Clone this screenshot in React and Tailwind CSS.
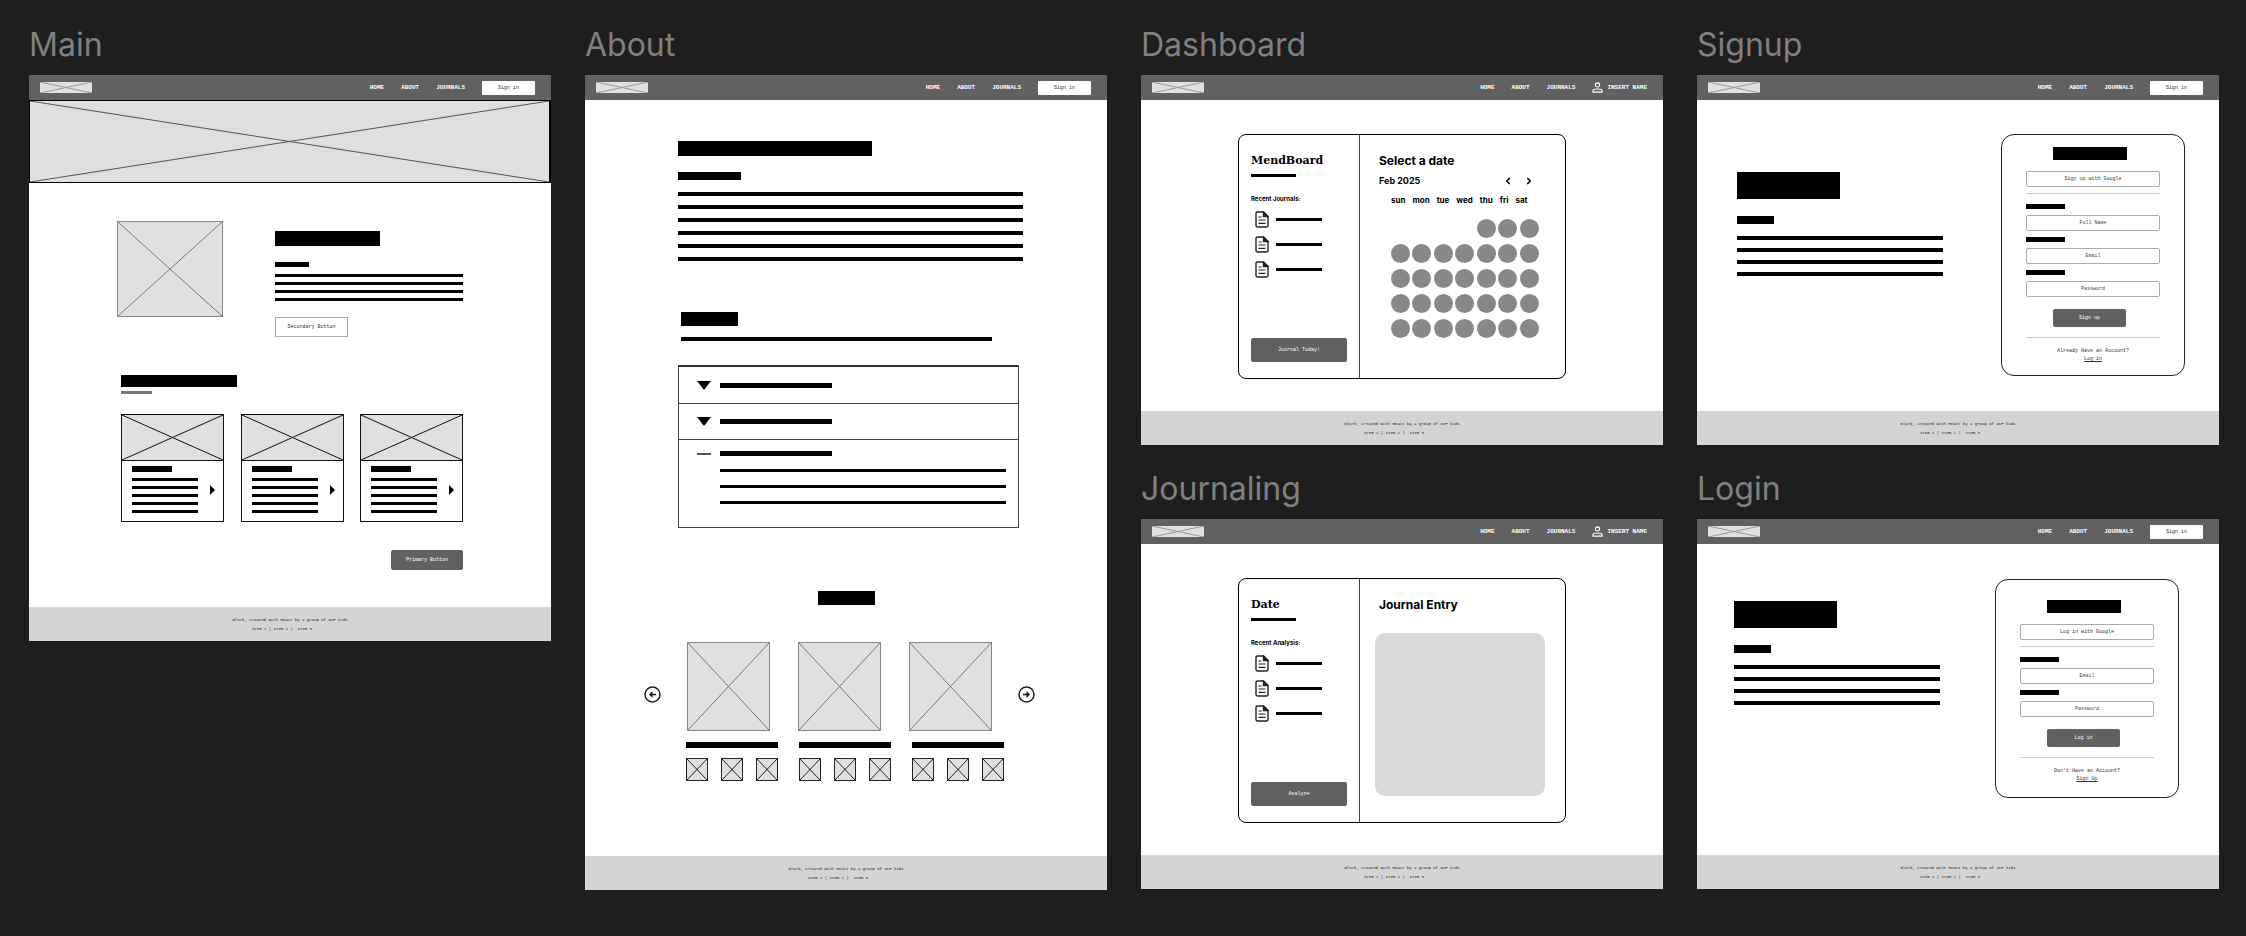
import clsx from "clsx";
import { ChevronLeft, ChevronRight } from "lucide-react";

const inter = "font-['Inter',sans-serif]";
const mono = "font-['Liberation_Mono',monospace]";
const slab = "font-['DejaVu_Serif',serif]";

// Solid block that stands in for copy
const Bar = ({ className }) => <div className={clsx("bg-black", className)} />;

const Lines = ({ count, className, line }) => (
    <div className={clsx("flex flex-col", className)}>
        {Array.from({ length: count }, (_, i) => <Bar key={i} className={line} />)}
    </div>
);

// Crossed box that stands in for an image
const Placeholder = ({ className, stroke = "#777777" }) => (
    <div className={clsx("bg-[#e0e0e0]", className)}>
        <svg className="block size-full" viewBox="0 0 100 100" preserveAspectRatio="none" stroke={stroke}>
            <path d="M0 0L100 100M100 0L0 100" vectorEffect="non-scaling-stroke" />
        </svg>
    </div>
);

const UserIcon = () => (
    <svg className="h-[11px] w-[11px]" viewBox="0 0 11 11" fill="none" stroke="white" strokeWidth="1.2">
        <circle cx="5.5" cy="2.9" r="2.1" />
        <path d="M1 10.2V8.6C1 7.6 2.2 7 5.5 7S10 7.6 10 8.6v1.6z" />
    </svg>
);

const FileIcon = () => (
    <svg className="h-[17px] w-[14px]" viewBox="0 0 14 17" fill="none" stroke="#222222" strokeWidth="1.4">
        <path d="M8.5 1H2.4Q1 1 1 2.4v12.2Q1 16 2.4 16h9.2q1.4 0 1.4-1.4V5.5z" strokeLinejoin="round" />
        <path d="M8.5 1v4.5H13z" fill="#222222" />
        <path d="M3.5 6h3M3.5 9h7M3.5 12.4h7" strokeWidth="1.1" />
    </svg>
);

const CircleArrow = ({ flip }) => (
    <svg className={clsx("size-[17px]", flip && "rotate-180")} viewBox="0 0 17 17" fill="none" stroke="#222222">
        <circle cx="8.5" cy="8.5" r="7.5" strokeWidth="1.5" />
        <path d="M12 8.5H6" strokeWidth="1.6" />
        <path d="M8.5 5L5 8.5 8.5 12z" fill="#222222" stroke="none" />
    </svg>
);

const NavBar = ({ account }) => (
    <header className={clsx("flex h-[25px] items-center bg-[#616161] pl-[11px] pr-4", mono)}>
        <Placeholder className="h-[11px] w-[52px]" stroke="#999999" />
        <nav className="ml-auto flex items-center gap-[17px] text-[6px] font-bold leading-[8px] text-white">
            <a href="#home">HOME</a>
            <a href="#about">ABOUT</a>
            <a href="#journals">JOURNALS</a>
            {account
                ? <a href="#account" className="flex items-center gap-1"><UserIcon />INSERT NAME</a>
                : <button className="h-[14px] w-[53px] rounded-[1px] bg-white text-[5px] font-normal text-[#333333]">Sign in</button>}
        </nav>
    </header>
);

const Footer = () => (
    <footer className={clsx("h-[34px] bg-[#d4d4d4] pt-[9px] text-center text-[4px] leading-[9px] text-[#222222]", mono)}>
        <p>Blurb, created with React by a group of UCF kids</p>
        <p className="whitespace-pre pr-4">
            <a href="#item1">Item 1</a> | <a href="#item2">Item 2</a> |{"  "}<a href="#item3">Item 3</a>
        </p>
    </footer>
);

const Frame = ({ title, account, children }) => (
    <article>
        <h2 className={clsx("mb-[10px] text-[32px] leading-10 text-[#808080]", inter)}>{title}</h2>
        <div className="bg-white">
            <NavBar account={account} />
            {children}
            <Footer />
        </div>
    </article>
);

const PrimaryButton = ({ className, children }) => (
    <button className={clsx("rounded-[2px] bg-[#616161] text-[5px] leading-[8px] text-white", mono, className)}>
        {children}
    </button>
);

const PostCard = () => (
    <div className="w-[103px] border border-[#111111]">
        <Placeholder className="h-[46px] border-b border-[#111111]" stroke="#111111" />
        <div className="flex items-center justify-between pb-2 pl-[10px] pr-2 pt-[5px]">
            <div className="w-[66px]">
                <Bar className="h-[6px] w-[40px]" />
                <Lines count={5} className="mt-[6px] gap-[5px]" line="h-[3px]" />
            </div>
            <svg className="h-[10px] w-[5px]" viewBox="0 0 5 10"><path d="M0 0L5 5 0 10z" /></svg>
        </div>
    </div>
);

const Main = () => (
    <Frame title="Main">
        <Placeholder className="h-[83px] border border-r-2 border-black" stroke="#555555" />
        <div className="px-[88px] pb-[37px] pt-[38px]">
            <div className="flex items-start justify-between">
                <Placeholder className="h-[96px] w-[106px] border border-[#888888]" />
                <div className="w-[188px] pt-[10px]">
                    <Bar className="h-[15px] w-[105px]" />
                    <Bar className="mt-4 h-[5px] w-[34px]" />
                    <Lines count={4} className="mt-[7px] gap-[5px]" line="h-[3px]" />
                    <button className={clsx("mt-4 block h-5 w-[73px] border border-[#aaaaaa] text-[5px] leading-[8px] text-[#333333]", mono)}>
                        Secondary Button
                    </button>
                </div>
            </div>
            <div className="ml-1 mt-[38px]">
                <Bar className="h-[12px] w-[116px]" />
                <div className="mt-1 h-[3px] w-[31px] bg-[#777777]" />
                <div className="mt-5 flex justify-between">
                    <PostCard />
                    <PostCard />
                    <PostCard />
                </div>
            </div>
            <PrimaryButton className="ml-auto mt-7 block h-5 w-[72px]">Primary Button</PrimaryButton>
        </div>
    </Frame>
);

const AccordionRow = ({ className }) => (
    <div className={clsx("flex items-center gap-[9px] border-b border-[#444444] pl-[18px]", className)}>
        <svg className="h-[9px] w-[14px]" viewBox="0 0 14 9"><path d="M0 0H14L7 9z" /></svg>
        <Bar className="h-[5px] w-[112px]" />
    </div>
);

const About = () => (
    <Frame title="About">
        <div className="pl-[93px] pr-[84px] pt-[41px]">
            <Bar className="h-[15px] w-[194px]" />
            <Bar className="mt-4 h-2 w-[63px]" />
            <Lines count={6} className="mt-3 gap-[9px]" line="h-1" />

            <div className="ml-[3px] mt-[51px]">
                <Bar className="h-[14px] w-[57px]" />
                <Bar className="mt-[11px] h-1 w-[311px]" />
            </div>
            <div className="mr-1 mt-6 border border-t-2 border-[#444444] border-t-[#333333]">
                <AccordionRow className="h-[37px]" />
                <AccordionRow className="h-9" />
                <div className="flex gap-[9px] pb-[23px] pl-[18px] pr-3 pt-[11px]">
                    <div className="mt-[2px] h-[2px] w-[14px] bg-[#555555]" />
                    <div className="flex-1">
                        <Bar className="h-[5px] w-[112px]" />
                        <Lines count={3} className="mt-[13px] gap-[13px]" line="h-[3px]" />
                    </div>
                </div>
            </div>
        </div>

        <Bar className="mx-auto mt-[63px] h-[14px] w-[57px]" />
        <div className="flex items-start pb-[75px] pl-[59px] pr-[72px] pt-[37px]">
            <button aria-label="Previous" className="mt-11"><CircleArrow /></button>
            <div className="ml-[25px]">
                <div className="ml-[1px] flex gap-7">
                    {[0, 1, 2].map((i) => (
                        <Placeholder key={i} className="h-[89px] w-[83px] border border-[#888888]" />
                    ))}
                </div>
                <div className="mt-[11px] flex gap-[21px]">
                    {[0, 1, 2].map((i) => (
                        <div key={i} className="w-[92px]">
                            <Bar className="h-[6px]" />
                            <div className="mt-[10px] flex justify-between">
                                <Placeholder className="h-[23px] w-[22px] border border-[#222222]" stroke="#222222" />
                                <Placeholder className="h-[23px] w-[22px] border border-[#222222]" stroke="#222222" />
                                <Placeholder className="h-[23px] w-[22px] border border-[#222222]" stroke="#222222" />
                            </div>
                        </div>
                    ))}
                </div>
            </div>
            <button aria-label="Next" className="ml-auto mt-11"><CircleArrow flip /></button>
        </div>
    </Frame>
);

const Board = ({ title, listTitle, action, children }) => (
    <div className="px-[97px] pb-8 pt-[34px]">
        <div className="flex rounded-[8px] border border-black">
            <div className="flex w-[121px] flex-col border-r border-[#444444] px-3 pb-4 pt-[18px]">
                <h3 className={clsx("text-[11px] font-bold leading-4", slab)}>{title}</h3>
                <Bar className="mt-[5px] h-[3px] w-[45px]" />
                <h4 className={clsx("mt-[18px] text-[6px] font-bold leading-[8px]", inter)}>{listTitle}</h4>
                <ul className="mb-[60px] mt-2 flex flex-col gap-2 pl-1">
                    {[0, 1, 2].map((i) => (
                        <li key={i} className="flex items-center gap-[7px]">
                            <FileIcon />
                            <Bar className="h-[3px] w-[46px]" />
                        </li>
                    ))}
                </ul>
                <PrimaryButton className="h-6 w-full">{action}</PrimaryButton>
            </div>
            <div className={clsx("flex-1 pl-[15px] pr-5 pt-[18px] font-bold", inter)}>{children}</div>
        </div>
    </div>
);

const days = ["sun", "mon", "tue", "wed", "thu", "fri", "sat"];

const Dashboard = () => (
    <Frame title="Dashboard" account>
        <Board title="MendBoard" listTitle="Recent Journals:" action="Journal Today!">
            <div className="w-[166px] pl-1">
                <h3 className="text-[12px] leading-4">Select a date</h3>
                <div className="mt-[6px] flex items-center pr-[7px] text-[9px] leading-3">
                    <span className="mr-auto">Feb 2025</span>
                    <button aria-label="Previous month"><ChevronLeft size={10} strokeWidth={4} /></button>
                    <button aria-label="Next month" className="ml-[11px]"><ChevronRight size={10} strokeWidth={4} /></button>
                </div>
                <div className="ml-3 mt-2 flex gap-[7px] text-[8px] leading-[10px]">
                    {days.map((day) => <span key={day}>{day}</span>)}
                </div>
                <div className="ml-3 mt-[14px] grid grid-cols-7 gap-y-[6px]">
                    {Array.from({ length: 31 }, (_, i) => (
                        <span key={i} className="size-[19px] rounded-full bg-[#888888] first:col-start-5" />
                    ))}
                </div>
            </div>
        </Board>
    </Frame>
);

const Journaling = () => (
    <Frame title="Journaling" account>
        <Board title="Date" listTitle="Recent Analysis:" action="Analyze">
            <h3 className="ml-1 text-[12px] leading-4">Journal Entry</h3>
            <textarea aria-label="Journal Entry" className="mt-5 block h-[163px] w-full resize-none rounded-[10px] bg-[#d9d9d9] p-2 text-[8px]" />
        </Board>
    </Frame>
);

const Field = ({ id, type = "text", name }) => (
    <>
        <label htmlFor={id} className="block h-[5px] w-[39px] bg-black" />
        <input
            id={id}
            type={type}
            aria-label={name}
            placeholder={name}
            className="my-[6px] block h-4 w-full rounded-[2px] border border-[#aaaaaa] text-center text-[5px] leading-[8px] placeholder:text-[#444444]"
        />
    </>
);

const AuthForm = ({ className, google, submit, question, link, children }) => (
    <form className={clsx("w-[184px] rounded-[13px] border border-[#222222] px-6 text-[5px] leading-[8px] text-[#333333]", mono, className)}>
        <Bar className="ml-[27px] h-[13px] w-[74px]" />
        <button type="button" className="mt-[11px] block h-4 w-full rounded-[2px] border border-[#aaaaaa]">{google}</button>
        <hr className="mb-[10px] mt-[6px] border-[#cccccc]" />
        {children}
        <PrimaryButton className="ml-[27px] mt-3 block h-[18px] w-[73px]">{submit}</PrimaryButton>
        <hr className="mb-[9px] mt-[10px] border-[#cccccc]" />
        <p className="text-center">
            {question}<br />
            <a href="#auth" className="underline">{link}</a>
        </p>
    </form>
);

const Pitch = ({ className }) => (
    <div className={clsx("w-[206px]", className)}>
        <Bar className="h-[27px] w-[103px]" />
        <Bar className="mt-[17px] h-2 w-[37px]" />
        <Lines count={4} className="mt-3 gap-2" line="h-1" />
    </div>
);

const Signup = () => (
    <Frame title="Signup">
        <div className="flex items-start justify-between pb-[35px] pl-10 pr-[34px] pt-[34px]">
            <Pitch className="mt-[38px]" />
            <AuthForm className="py-3" google="Sign up with Google" submit="Sign up" question="Already Have an Account?" link="Log in">
                <Field id="signup-name" name="Full Name" />
                <Field id="signup-email" type="email" name="Email" />
                <Field id="signup-password" type="password" name="Password" />
            </AuthForm>
        </div>
    </Frame>
);

const Login = () => (
    <Frame title="Login">
        <div className="flex items-start justify-between pb-[57px] pl-[37px] pr-10 pt-[35px]">
            <Pitch className="mt-[22px]" />
            <AuthForm className="pb-[14px] pt-5" google="Log in with Google" submit="Log in" question="Don't Have an Account?" link="Sign Up">
                <Field id="login-email" type="email" name="Email" />
                <Field id="login-password" type="password" name="Password" />
            </AuthForm>
        </div>
    </Frame>
);

export default function App() {
    return (
        <main className="grid min-h-screen grid-cols-1 items-start gap-[34px] bg-[#1e1e1e] pb-6 pl-[29px] pr-[27px] pt-[25px] md:grid-cols-2 2xl:grid-cols-4">
            <Main />
            <About />
            <div className="flex flex-col gap-6">
                <Dashboard />
                <Journaling />
            </div>
            <div className="flex flex-col gap-6">
                <Signup />
                <Login />
            </div>
        </main>
    );
}
